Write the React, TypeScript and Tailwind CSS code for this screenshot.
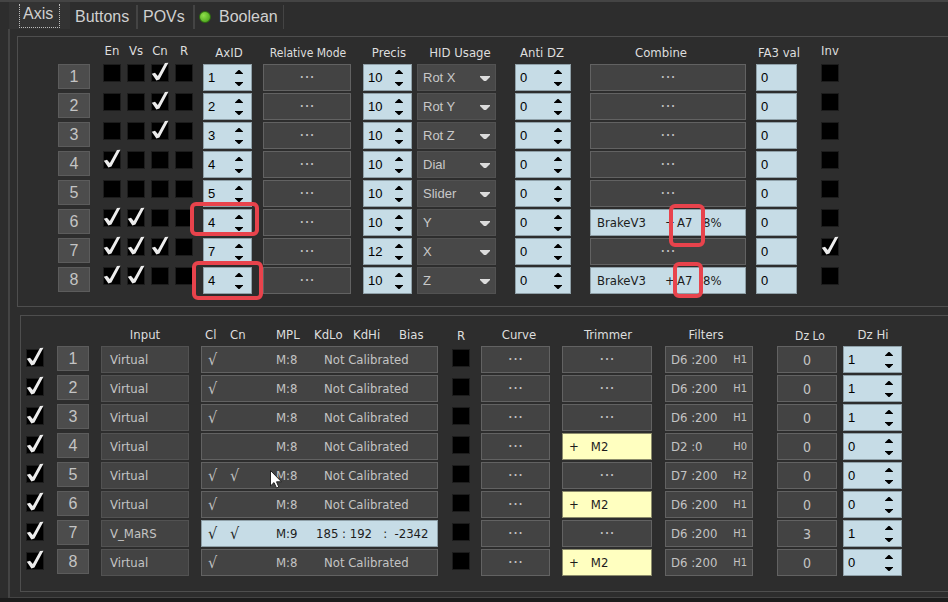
import { useState } from "react";

type AxisRow = {
  id: number;
  flags: boolean[];
  axId: string;
  precision: string;
  usage: string;
  combine?: { name: string; op: string; source: string; amount: string };
  inverted?: boolean;
};

type InputRow = {
  id: number;
  input: string;
  cl: boolean;
  cn: boolean;
  mpl: string;
  calibration?: string;
  trimmer?: string;
  filter: string;
  hold: string;
  dzLo: string;
  dzHi: string;
};

const FLAGS = ["En", "Vs", "Cn", "R"];
const USAGES = ["Rot X", "Rot Y", "Rot Z", "Dial", "Slider", "X", "Y", "Z"];

const brake = { name: "BrakeV3", op: "+", source: "A7", amount: "8%" };

const AXES: AxisRow[] = [
  { id: 1, flags: [false, false, true, false], axId: "1", precision: "10", usage: "Rot X" },
  { id: 2, flags: [false, false, true, false], axId: "2", precision: "10", usage: "Rot Y" },
  { id: 3, flags: [false, false, true, false], axId: "3", precision: "10", usage: "Rot Z" },
  { id: 4, flags: [true, false, false, false], axId: "4", precision: "10", usage: "Dial" },
  { id: 5, flags: [false, false, false, false], axId: "5", precision: "10", usage: "Slider" },
  { id: 6, flags: [true, true, false, false], axId: "4", precision: "10", usage: "Y", combine: brake },
  { id: 7, flags: [true, true, true, false], axId: "7", precision: "12", usage: "X", inverted: true },
  { id: 8, flags: [true, true, false, false], axId: "4", precision: "10", usage: "Z", combine: brake },
];

const INPUTS: InputRow[] = [
  { id: 1, input: "Virtual", cl: true, cn: false, mpl: "M:8", filter: "D6 :200", hold: "H1", dzLo: "0", dzHi: "1" },
  { id: 2, input: "Virtual", cl: true, cn: false, mpl: "M:8", filter: "D6 :200", hold: "H1", dzLo: "0", dzHi: "1" },
  { id: 3, input: "Virtual", cl: true, cn: false, mpl: "M:8", filter: "D6 :200", hold: "H1", dzLo: "0", dzHi: "1" },
  { id: 4, input: "Virtual", cl: false, cn: false, mpl: "M:8", trimmer: "M2", filter: "D2 :0", hold: "H0", dzLo: "0", dzHi: "0" },
  { id: 5, input: "Virtual", cl: true, cn: true, mpl: "M:8", filter: "D7 :200", hold: "H2", dzLo: "0", dzHi: "0" },
  { id: 6, input: "Virtual", cl: true, cn: false, mpl: "M:8", trimmer: "M2", filter: "D6 :200", hold: "H1", dzLo: "0", dzHi: "0" },
  { id: 7, input: "V_MaRS", cl: true, cn: true, mpl: "M:9", calibration: "185 : 192   :  -2342", filter: "D6 :200", hold: "H1", dzLo: "3", dzHi: "1" },
  { id: 8, input: "Virtual", cl: true, cn: false, mpl: "M:8", trimmer: "M2", filter: "D6 :200", hold: "H1", dzLo: "0", dzHi: "0" },
];

function Check({ label, checked }: { label: string; checked?: boolean }) {
  return (
    <label className="relative block size-[18px]">
      <input
        type="checkbox"
        aria-label={label}
        defaultChecked={checked}
        className="peer block size-[18px] appearance-none border border-[#1c1c1c] bg-black"
      />
      <svg
        viewBox="0 0 18 18"
        className="pointer-events-none absolute inset-0 hidden size-[18px] overflow-visible peer-checked:block"
      >
        <path d="M.8 9.800 4 8.800 6.800 12 14-1 17.400-1.200 8.400 15.600 5.400 16.600Z" fill="#ececec" />
      </svg>
    </label>
  );
}

function Spin({ label, value, className }: { label: string; value: string; className: string }) {
  const [current, setCurrent] = useState(value);
  const step = (by: number) => setCurrent(String(Number(current) + by));

  return (
    <div className={`flex h-[27px] items-center border border-[#8fa0a8] bg-[#c6dce6] text-black ${className}`}>
      <input
        aria-label={label}
        value={current}
        onChange={(e) => setCurrent(e.target.value)}
        className="w-0 flex-1 bg-transparent pl-1 font-['Liberation_Sans',sans-serif] text-[13px] leading-4 outline-none"
      />
      <div className="mr-2 flex flex-col">
        <button aria-label={`${label} up`} onClick={() => step(1)} className="block pb-1">
          <svg viewBox="0 0 8 4" className="block h-1 w-2"><path d="M0 4V3.500L3.500 0H4.500L8 3.500V4Z" /></svg>
        </button>
        <button aria-label={`${label} down`} onClick={() => step(-1)} className="block pt-1">
          <svg viewBox="0 0 8 4" className="block h-1 w-2"><path d="M0 0V.5L3.500 4H4.500L8 .5V0Z" /></svg>
        </button>
      </div>
    </div>
  );
}

function NumberButton({ id }: { id: number }) {
  return (
    <button className="block h-[25px] w-8 border border-[#5c5c5c] bg-[#4c4c4c] font-['Liberation_Sans',sans-serif] text-base leading-5 text-[#c4c4c4]">
      {id}
    </button>
  );
}

function Dots({ label, className }: { label: string; className: string }) {
  return (
    <button
      aria-label={label}
      className={`block h-[27px] border border-[#626262] bg-[#434343] text-center font-['DejaVu_Sans',sans-serif] text-base leading-5 text-[#c0c0c0] ${className}`}
    >
      ···
    </button>
  );
}

function Head({ text, className }: { text: string; className: string }) {
  return (
    <th className="p-0 align-top font-normal">
      <div className={`flex justify-center whitespace-nowrap ${className}`}>{text}</div>
    </th>
  );
}

function AxisTable() {
  return (
    <table className="ml-10 table-fixed border-collapse text-left">
      <colgroup>
        <col className="w-[45px]" />
        <col className="w-6" />
        <col className="w-6" />
        <col className="w-6" />
        <col className="w-7" />
        <col className="w-[60px]" />
        <col className="w-[100px]" />
        <col className="w-[54px]" />
        <col className="w-[98px]" />
        <col className="w-[75px]" />
        <col className="w-[166px]" />
        <col className="w-[65px]" />
        <col className="w-[18px]" />
      </colgroup>
      <thead>
        <tr className="h-[27px]">
          <th className="p-0" />
          {FLAGS.map((flag) => (
            <Head key={flag} text={flag} className="w-[18px] pt-[6px]" />
          ))}
          <Head text="AxID" className="w-[52px] pt-2" />
          <Head text="Relative Mode" className="w-[90px] pt-2 text-xs leading-4" />
          <Head text="Precis" className="w-[52px] pt-2" />
          <Head text="HID Usage" className="w-[86px] pt-2" />
          <Head text="Anti DZ" className="w-[54px] pt-2" />
          <Head text="Combine" className="w-[142px] pt-2" />
          <Head text="FA3 val" className="w-[46px] pt-2" />
          <Head text="Inv" className="w-[18px] pt-[6px]" />
        </tr>
      </thead>
      <tbody>
        {AXES.map((row) => (
          <tr key={row.id} className="h-[29px] align-top">
            <td className="p-0"><NumberButton id={row.id} /></td>
            {row.flags.map((on, i) => (
              <td key={FLAGS[i]} className="p-0"><Check label={`${FLAGS[i]} ${row.id}`} checked={on} /></td>
            ))}
            <td className="p-0"><Spin label={`AxID ${row.id}`} value={row.axId} className="w-[49px]" /></td>
            <td className="p-0"><Dots label={`Relative Mode ${row.id}`} className="w-[88px]" /></td>
            <td className="p-0"><Spin label={`Precis ${row.id}`} value={row.precision} className="w-[49px]" /></td>
            <td className="p-0">
              <div className="relative w-[79px]">
                <select
                  aria-label={`HID Usage ${row.id}`}
                  defaultValue={row.usage}
                  className="block h-[27px] w-full appearance-none border border-[#525252] bg-[#484848] pl-[5px] font-['Liberation_Sans',sans-serif] text-[13px] leading-5 text-[#c8c8c8]"
                >
                  {USAGES.map((usage) => (
                    <option key={usage}>{usage}</option>
                  ))}
                </select>
                <svg viewBox="0 0 10 5" className="pointer-events-none absolute top-3 right-[6px] h-[5px] w-[10px]">
                  <path d="M0 0H10V1L6 5H4L0 1Z" fill="#dcdcdc" />
                </svg>
              </div>
            </td>
            <td className="p-0"><Spin label={`Anti DZ ${row.id}`} value="0" className="w-14" /></td>
            <td className="p-0">
              {row.combine ? (
                <button className="grid h-[27px] w-[156px] grid-cols-[68px_12px_26px_1fr] items-center border border-[#8fa0a8] bg-[#c6dce6] pl-1.5 text-left text-[#1c1c1c]">
                  <span>{row.combine.name}</span>
                  <span>{row.combine.op}</span>
                  <span>{row.combine.source}</span>
                  <span>{row.combine.amount}</span>
                </button>
              ) : (
                <Dots label={`Combine ${row.id}`} className="w-[156px]" />
              )}
            </td>
            <td className="p-0">
              <input
                aria-label={`FA3 val ${row.id}`}
                defaultValue="0"
                className="block h-[27px] w-[41px] border border-[#8fa0a8] bg-[#c6dce6] pl-1 font-['Liberation_Sans',sans-serif] text-[13px] text-black"
              />
            </td>
            <td className="p-0"><Check label={`Inv ${row.id}`} checked={row.inverted} /></td>
          </tr>
        ))}
      </tbody>
    </table>
  );
}

function InputTable() {
  return (
    <table className="ml-[5px] table-fixed border-collapse text-left">
      <colgroup>
        <col className="w-[31px]" />
        <col className="w-11" />
        <col className="w-[100px]" />
        <col className="w-[251px]" />
        <col className="w-[29px]" />
        <col className="w-[81px]" />
        <col className="w-[103px]" />
        <col className="w-[112px]" />
        <col className="w-[66px]" />
        <col className="w-[59px]" />
      </colgroup>
      <thead>
        <tr className="h-[30px]">
          <th className="p-0" />
          <th className="p-0" />
          <Head text="Input" className="w-[88px] pt-[11px]" />
          <th className="p-0 align-top font-normal">
            <div className="grid grid-cols-[25px_46px_38px_39px_46px_1fr] pt-[11px] pl-1">
              <span>Cl</span>
              <span>Cn</span>
              <span>MPL</span>
              <span>KdLo</span>
              <span>KdHi</span>
              <span>Bias</span>
            </div>
          </th>
          <Head text="R" className="w-[18px] pt-3" />
          <Head text="Curve" className="w-[76px] pt-[11px]" />
          <Head text="Trimmer" className="w-[92px] pt-[11px]" />
          <Head text="Filters" className="w-[82px] pt-[11px]" />
          <Head text="Dz Lo" className="w-[66px] pt-3 text-xs leading-4" />
          <Head text="Dz Hi" className="w-[60px] pt-[11px]" />
        </tr>
      </thead>
      <tbody>
        {INPUTS.map((row) => (
          <tr key={row.id} className="h-[29px] align-top">
            <td className="p-0 pt-[3px]"><Check label={`Use ${row.id}`} checked /></td>
            <td className="p-0"><NumberButton id={row.id} /></td>
            <td className="p-0">
              <button className="block h-[27px] w-[88px] border border-[#525252] bg-[#434343] pl-2 text-left text-[#c4c4c4]">
                {row.input}
              </button>
            </td>
            <td className="p-0">
              <button
                className={`grid h-[27px] w-[237px] grid-cols-[22px_46px_40px_1fr] items-center border pl-1.5 text-left ${
                  row.calibration
                    ? "border-[#8fa0a8] bg-[#c6dce6] text-[#1c1c1c]"
                    : "border-[#626262] bg-[#434343] text-[#c4c4c4]"
                }`}
              >
                <span className="text-base leading-4">{row.cl && "√"}</span>
                <span className="text-base leading-4">{row.cn && "√"}</span>
                <span>{row.mpl}</span>
                {row.calibration ? (
                  <span className="whitespace-pre">{row.calibration}</span>
                ) : (
                  <span className="pl-2">Not Calibrated</span>
                )}
              </button>
            </td>
            <td className="p-0 pt-[3px]"><Check label={`R ${row.id}`} /></td>
            <td className="p-0"><Dots label={`Curve ${row.id}`} className="w-[69px]" /></td>
            <td className="p-0">
              {row.trimmer ? (
                <button className="flex h-[27px] w-[90px] items-center gap-3 border border-[#8c8c6c] bg-[#ffffc0] pl-1.5 text-[#1c1c1c]">
                  <span>+</span>
                  <span>{row.trimmer}</span>
                </button>
              ) : (
                <Dots label={`Trimmer ${row.id}`} className="w-[90px]" />
              )}
            </td>
            <td className="p-0">
              <button className="flex h-[27px] w-[88px] items-center justify-between border border-[#626262] bg-[#434343] px-[5px] text-[#c4c4c4]">
                <span>{row.filter}</span>
                <span className="text-[11px]">{row.hold}</span>
              </button>
            </td>
            <td className="p-0">
              <button className="block h-[27px] w-[60px] border border-[#626262] bg-[#434343] text-sm text-[#c4c4c4]">
                {row.dzLo}
              </button>
            </td>
            <td className="p-0"><Spin label={`Dz Hi ${row.id}`} value={row.dzHi} className="w-[59px]" /></td>
          </tr>
        ))}
      </tbody>
    </table>
  );
}

export default function App() {
  return (
    <div className="relative overflow-hidden bg-[#2d2d2d] font-['DejaVu_Sans_Condensed','DejaVu_Sans',sans-serif] text-[13px] leading-4 text-[#dedede]">
      <nav
        role="tablist"
        className="flex h-[29px] items-start border-t-2 border-[#444] pl-[9px] font-['Liberation_Sans',sans-serif] text-base leading-5 text-[#d0d0d0]"
      >
        <button role="tab" aria-selected="true" className="h-[27px] w-[61px] bg-[#333] pl-[10px] text-left">
          <span className="block h-6 w-[41px] border border-t-0 border-dotted border-[#bbb] pl-[3px]">Axis</span>
        </button>
        <button role="tab" aria-selected="false" className="mt-[3px] h-6 w-[68px] border-r-2 border-[#444] pl-[5px] text-left">
          Buttons
        </button>
        <button role="tab" aria-selected="false" className="mt-[3px] h-6 w-[57px] border-r-2 border-[#444] pl-[5px] text-left">
          POVs
        </button>
        <button role="tab" aria-selected="false" className="mt-[3px] flex h-6 w-[89px] items-center gap-2 border-r border-[#444] pl-1">
          <span className="size-3 rounded-full border border-[#2f6b12] bg-radial-[at_35%_35%] from-[#8fe04a] to-[#3f9a14]" />
          Boolean
        </button>
      </nav>

      <main className="ml-2 border-b border-l-2 border-[#444] pt-[7px] pb-[5px]">
        <section className="ml-[7px] border border-r-0 border-[#4e4e4e] pb-[10px]">
          <AxisTable />
        </section>
        <section className="mt-2 ml-[10px] border border-r-0 border-[#4e4e4e] pb-[13px]">
          <InputTable />
        </section>
      </main>
      <div className="h-1 bg-[#1c1c1c]" />

      {/* Highlights drawn over the matching axis ids */}
      <div className="pointer-events-none absolute top-[202px] left-[190px] h-[34px] w-[69px] rounded-md border-4 border-[#e8434c]" />
      <div className="pointer-events-none absolute top-[261px] left-[192px] h-[39px] w-[71px] rounded-md border-4 border-[#e8434c]" />
      <div className="pointer-events-none absolute top-[204px] left-[669px] h-[43px] w-9 rounded-md border-4 border-[#e8434c]" />
      <div className="pointer-events-none absolute top-[262px] left-[673px] h-9 w-[30px] rounded-md border-4 border-[#e8434c]" />

      {/* Mouse pointer */}
      <svg viewBox="0 0 12 19" className="pointer-events-none absolute top-[470px] left-[270px] h-[19px] w-3">
        <path d="M.5.5V16L4 12.600 6.500 18 8.800 17 6.500 11.800H11.500Z" fill="#fff" stroke="#222" />
      </svg>
    </div>
  );
}
